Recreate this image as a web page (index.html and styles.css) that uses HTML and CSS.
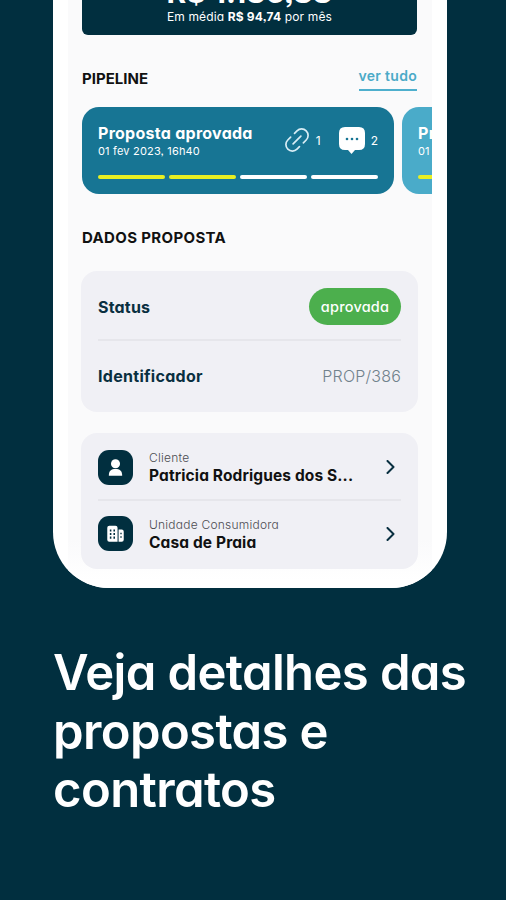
FILE: index.html
```html
<!DOCTYPE html>
<html lang="pt-BR">
<head>
<meta charset="utf-8">
<title>Detalhes da proposta</title>
<link rel="stylesheet" href="styles.css">
</head>
<body>
<main class="promo">
  <div class="phone">
    <div class="screen">
      <section class="summary">
        <div class="total">R$ 1.136,88</div>
        <div class="average">Em média <b>R$ 94,74</b> por mês</div>
      </section>
      <header class="section-head">
        <h2 class="heading">PIPELINE</h2>
        <a class="see-all">ver tudo</a>
      </header>
      <div class="pipeline">
        <article class="step">
          <div class="step-top">
            <div>
              <div class="step-title">Proposta aprovada</div>
              <div class="step-date">01 fev 2023, 16h40</div>
            </div>
            <div class="counts">
              <svg class="link-icon" viewBox="0 0 26 26"><g transform="rotate(-45 13 13)"><path d="M10.500 6.500H6.500a6.500 6.500 0 0 0 0 13h3.500M15.500 19.500h4a6.500 6.500 0 0 0 0-13h-3.500M7.500 13h11"/></g></svg>
              <span>1</span>
              <svg class="chat-icon" viewBox="0 0 28 27"><path d="M7 0h14q6 0 6 6v11q0 6-6 6h-4l-3.500 4-3.500-4H7q-6 0-6-6V6q0-6 6-6z" fill="#fff"/><g fill="#177594"><circle cx="9" cy="12" r="1.300"/><circle cx="14" cy="12" r="1.300"/><circle cx="19" cy="12" r="1.300"/></g></svg>
              <span>2</span>
            </div>
          </div>
          <div class="progress"><i class="done"></i><i class="done"></i><i></i><i></i></div>
        </article>
        <article class="step next">
          <div class="step-top">
            <div>
              <div class="step-title">Proposta</div>
              <div class="step-date">01 fev 2023</div>
            </div>
          </div>
          <div class="progress"><i class="done"></i><i></i><i></i><i></i></div>
        </article>
      </div>
      <h2 class="heading data-title">DADOS PROPOSTA</h2>
      <section class="panel data">
        <div class="row"><b class="status-label">Status</b><span class="badge">aprovada</span></div>
        <div class="row"><b class="id-label">Identificador</b><span class="code">PROP/386</span></div>
      </section>
      <section class="panel links">
        <div class="item">
          <div class="tile"><svg viewBox="0 0 34 34"><circle cx="17" cy="13.300" r="4.400"/><path d="M10.500 25c0-5 2.500-6.500 6.500-6.500s6.500 1.500 6.500 6.500z"/></svg></div>
          <div class="info"><div class="kind">Cliente</div><div class="name">Patricia Rodrigues dos S...</div></div>
          <svg class="chevron" viewBox="0 0 9 14"><path d="M1.500 1 7.500 7l-6 6"/></svg>
        </div>
        <div class="item">
          <div class="tile"><svg viewBox="0 0 34 34"><path fill-rule="evenodd" d="M11 9.500h6q2 0 2 2v13.500h-8q-2 0-2-2v-11.500q0-2 2-2zM11.500 13v2h1.500v-2zm3.500 0v2h1.500v-2zm-3.500 3.500v2h1.500v-2zm3.500 0v2h1.500v-2zm-3.500 3.500v2h1.500v-2zm3.500 0v2h1.500v-2zM20 13h3q2 0 2 2v8q0 2-2 2h-3zm1.700 3.200v1.500h1.300v-1.500zm0 3.400v1.500h1.300v-1.500z"/></svg></div>
          <div class="info"><div class="kind">Unidade Consumidora</div><div class="name">Casa de Praia</div></div>
          <svg class="chevron" viewBox="0 0 9 14"><path d="M1.500 1 7.500 7l-6 6"/></svg>
        </div>
      </section>
    </div>
  </div>
  <h1 class="headline">Veja detalhes das<br>propostas e<br>contratos</h1>
</main>
</body>
</html>
```

FILE: styles.css
```css
* { box-sizing: border-box; }
body {
  margin: 0;
  background: #012f3f;
  font-family: Inter, "Liberation Sans", sans-serif;
  font-feature-settings: "cv11", "ss03";
}
.promo { height: 900px; overflow: hidden; }
.phone {
  width: 394px;
  height: 588px;
  margin-left: 53px;
  padding: 0 15px;
  background: #fff;
  border-radius: 0 0 56px 56px;
  overflow: hidden;
}
.screen { height: 588px; padding: 0 15px 0 14px; background: linear-gradient(#fafafb 540px, #fff 580px); }
.summary {
  display: flex;
  flex-direction: column;
  justify-content: flex-end;
  height: 35px;
  padding-bottom: 10px;
  overflow: hidden;
  background: #012f3f;
  border-radius: 0 0 6px 6px;
  color: #fff;
  text-align: center;
  white-space: nowrap;
}
.total { flex: none; margin-bottom: 2px; line-height: 30px; font-size: 30px; font-weight: 700; }
.average { flex: none; font-size: 12px; line-height: 16px; letter-spacing: 0.150px; }
.section-head { display: flex; justify-content: space-between; height: 72px; padding-top: 31px; }
.heading { margin: 0; font-size: 15px; line-height: 26px; font-weight: 650; color: #111; white-space: nowrap; }
.see-all { height: 25px; border-bottom: 2px solid #4eafcd; color: #4baac8; font-size: 14px; line-height: 20px; font-weight: 600; letter-spacing: 0.300px; white-space: nowrap; }
.pipeline { display: flex; gap: 8px; height: 87px; margin-right: -15px; overflow: hidden; }
.step { flex: 0 0 312px; padding: 16px 16px 0; border-radius: 17px; background: #177594; color: #fff; }
.step.next { background: #4aabc9; }
.step-top { display: flex; justify-content: space-between; height: 52px; white-space: nowrap; }
.step-title { font-size: 16px; line-height: 21px; font-weight: 750; letter-spacing: 0.270px; }
.step-date { font-size: 11px; line-height: 15px; letter-spacing: 0.180px; }
.counts { display: flex; align-items: flex-start; font-size: 12px; line-height: 35px; }
.link-icon { width: 26px; height: 26px; margin: 4px 6px 0 0; fill: none; stroke: #d8edf5; stroke-width: 1.700; stroke-linecap: round; }
.chat-icon { width: 28px; height: 27px; margin: 4px 5px 0 17px; }
.progress { display: grid; grid-template-columns: repeat(4, 1fr); gap: 4px; }
.progress i { height: 4px; border-radius: 2px; background: #fff; }
.progress .done { background: #e8ef22; }
.data-title { margin-top: 31px; letter-spacing: 0.350px; }
.panel { margin: 0 -1px; padding: 0 17px; border-radius: 16px; background: #f0f0f5; }
.data { height: 141px; margin-top: 20px; padding-top: 3px; }
.row { display: flex; align-items: center; justify-content: space-between; height: 65px; color: #092f40; font-size: 16px; }
.row + .row { height: 72px; border-top: 2px solid #e6e6eb; }
.status-label { letter-spacing: 0.200px; }
.id-label { letter-spacing: 0.300px; }
.badge { width: 92px; height: 37px; border-radius: 19px; background: #4caf4d; color: #fff; font-size: 14.500px; font-weight: 500; line-height: 37px; letter-spacing: 0.200px; text-align: center; }
.code { color: #71828c; font-size: 16px; font-weight: 300; letter-spacing: 0.200px; }
.links { height: 136px; margin-top: 21px; padding-top: 2px; }
.item { display: flex; align-items: center; height: 64px; }
.item + .item { height: 67px; border-top: 2px solid #e6e6eb; }
.tile { width: 35px; height: 35px; border-radius: 11px; background: #012f3f; }
.tile svg { display: block; width: 35px; height: 35px; fill: #fff; }
.info { flex: 1; margin-left: 16px; white-space: nowrap; }
.kind { color: #4c4c52; font-size: 12px; line-height: 17px; font-weight: 300; letter-spacing: 0.220px; }
.name { color: #111; font-size: 15.500px; line-height: 19px; font-weight: 750; letter-spacing: 0.120px; }
.chevron { width: 9px; height: 14px; margin-right: 6px; fill: none; stroke: #092f40; stroke-width: 2; stroke-linecap: round; stroke-linejoin: round; }
.headline { margin: 56px 0 0 53px; color: #fff; font-size: 49px; line-height: 58.500px; font-weight: 620; letter-spacing: -0.620px; white-space: nowrap; }
```
